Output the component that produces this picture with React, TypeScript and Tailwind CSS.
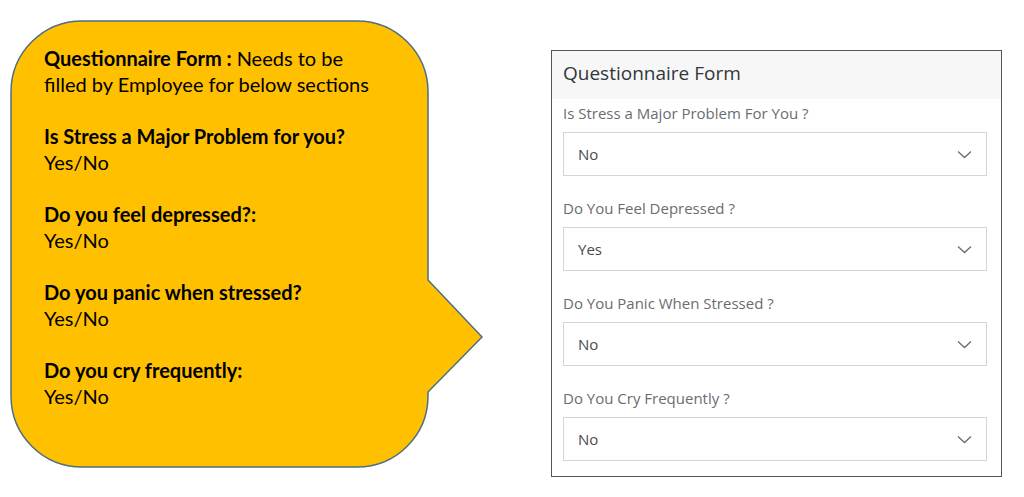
import React from "react";

const fields = [
  { label: "Is Stress a Major Problem For You ?", value: "No" },
  { label: "Do You Feel Depressed ?", value: "Yes" },
  { label: "Do You Panic When Stressed ?", value: "No" },
  { label: "Do You Cry Frequently ?", value: "No" },
];

const questions = [
  "Is Stress a Major Problem for you?",
  "Do you feel depressed?:",
  "Do you panic when stressed?",
  "Do you cry frequently:",
];

function Chevron() {
  return (
    <svg width="15" height="9" viewBox="0 0 15 9" fill="none">
      <path d="M1 1.5 L7.5 7.5 L14 1.5" stroke="#6a6d70" strokeWidth="1.3" />
    </svg>
  );
}

export default function App() {
  return (
    <div className="w-[1024px] h-[497px] bg-white flex items-start pl-[10px] pt-[20px]">
      <div className="relative w-[474px] h-[448px] shrink-0">
        <svg
          className="absolute inset-0"
          width="474"
          height="448"
          viewBox="0 0 474 448"
        >
          <path
            d="M72 1 H347 A71 71 0 0 1 418 72 V260 L472 317 L418 372 V376 A71 71 0 0 1 347 447 H72 A71 71 0 0 1 1 376 V72 A71 71 0 0 1 72 1 Z"
            fill="#FFC000"
            stroke="#4e6e80"
            strokeWidth="1.5"
          />
        </svg>
        <div className="relative pl-[34px] pt-[25px] text-[20px] leading-[26px] text-black font-['Lato',sans-serif]">
          <div>
            <span className="font-bold">Questionnaire Form : </span>
            Needs to be
            <br />
            filled by Employee for below sections
          </div>
          {questions.map((q) => (
            <div key={q} className="mt-[26px]">
              <div className="font-bold">{q}</div>
              <div>Yes/No</div>
            </div>
          ))}
        </div>
      </div>

      <div className="ml-[67px] mt-[30px] w-[451px] h-[427px] border border-[#555] bg-white shrink-0 font-['Open_Sans',sans-serif]">
        <div className="h-[48px] bg-[#f7f7f7] pl-[11px] pb-[4px] flex items-center text-[19px] text-[#32363a]">
          Questionnaire Form
        </div>
        <div className="pl-[11px] pr-[14px] pt-[4px] flex flex-col gap-[22px]">
          {fields.map((f) => (
            <div key={f.label} className="flex flex-col">
              <div className="h-[20px] leading-[20px] text-[15px] text-[#6a6d70]">
                {f.label}
              </div>
              <div className="mt-[9px] h-[44px] border border-[#d5d5d5] flex items-center justify-between pl-[14px] pr-[14px] text-[15px] text-[#4a4a4a]">
                <span>{f.value}</span>
                <Chevron />
              </div>
            </div>
          ))}
        </div>
      </div>
    </div>
  );
}
